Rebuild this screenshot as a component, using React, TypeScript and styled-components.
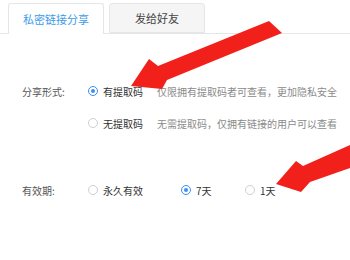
import React from 'react';
import styled, { createGlobalStyle } from 'styled-components';

const GlobalStyle = createGlobalStyle`
  body {
    margin: 0;
    background: #fff;
    font-family: "Noto Sans CJK SC", "Noto Sans", sans-serif;
  }
`;

interface OptionData {
  label: string;
  checked?: boolean;
}

const App: React.FC = () => {
  const periods: OptionData[] = [
    { label: '永久有效' },
    { label: '7天', checked: true },
    { label: '1天' },
  ];

  return (
    <Page>
      <GlobalStyle />
      <TabBar>
        <Tab active>私密链接分享</Tab>
        <Tab>发给好友</Tab>
      </TabBar>

      <Form>
        <Row>
          <Label>分享形式:</Label>
          <Option>
            <Radio checked />
            <OptionText>有提取码</OptionText>
          </Option>
          <Desc>仅限拥有提取码者可查看，更加隐私安全</Desc>
        </Row>
        <Row>
          <Label />
          <Option>
            <Radio />
            <OptionText>无提取码</OptionText>
          </Option>
          <Desc>无需提取码，仅拥有链接的用户可以查看</Desc>
        </Row>
        <Row spaced>
          <Label>有效期:</Label>
          <Options>
            {periods.map((p) => (
              <Option key={p.label}>
                <Radio checked={p.checked} />
                <OptionText>{p.label}</OptionText>
              </Option>
            ))}
          </Options>
        </Row>
      </Form>

      <Arrows width="350" height="260" viewBox="0 0 350 260">
        <polygon points="131,86 149,59 158,66 269,21 282,33 167,80 162,89" />
        <polygon points="276,184 296,161 303,166 350,145 350,168 310,182 301,192" />
      </Arrows>
    </Page>
  );
};

const Page = styled.div`
  position: relative;
  width: 350px;
  height: 260px;
  overflow: hidden;
  background: #fff;
`;

const TabBar = styled.div`
  display: flex;
  gap: 5px;
  height: 30px;
  padding: 3px 0 0 8px;
  border-bottom: 1px solid #e6e6e6;
`;

const Tab = styled.div<{ active?: boolean }>`
  display: flex;
  align-items: center;
  justify-content: center;
  width: 96px;
  height: ${({ active }) => (active ? '31px' : '30px')};
  margin-bottom: ${({ active }) => (active ? '-1px' : '0')};
  border: 1px solid #e6e6e6;
  border-bottom: ${({ active }) => (active ? 'none' : '1px solid #e6e6e6')};
  border-radius: 3px 3px 0 0;
  background: ${({ active }) => (active ? '#fff' : '#f5f5f5')};
  color: ${({ active }) => (active ? '#3d9be9' : '#444')};
  font-size: 11px;
  box-sizing: border-box;
`;

const Form = styled.div`
  display: flex;
  flex-direction: column;
  gap: 12px;
  padding: 47px 0 0 22px;
`;

const Row = styled.div<{ spaced?: boolean }>`
  display: flex;
  align-items: center;
  height: 20px;
  margin-top: ${({ spaced }) => (spaced ? '35px' : '0')};
`;

const Label = styled.div`
  width: 66px;
  flex-shrink: 0;
  color: #555;
  font-size: 10px;
`;

const Options = styled.div`
  display: grid;
  grid-template-columns: 93px 64px auto;
  align-items: center;
`;

const Option = styled.div`
  display: flex;
  align-items: center;
  gap: 5px;
`;

const Radio = styled.span<{ checked?: boolean }>`
  position: relative;
  width: 10px;
  height: 10px;
  border-radius: 50%;
  border: 1px solid ${({ checked }) => (checked ? '#3b8ff0' : '#cfcfcf')};
  box-sizing: border-box;
  background: #fff;

  &::after {
    content: '';
    display: ${({ checked }) => (checked ? 'block' : 'none')};
    position: absolute;
    left: 2px;
    top: 2px;
    width: 4px;
    height: 4px;
    border-radius: 50%;
    background: #3b8ff0;
  }
`;

const OptionText = styled.span`
  color: #333;
  font-size: 10px;
`;

const Desc = styled.span`
  margin-left: 14px;
  color: #8a8a8a;
  font-size: 10px;
`;

const Arrows = styled.svg`
  position: absolute;
  left: 0;
  top: 0;
  fill: #f2201b;
  pointer-events: none;
`;

export default App;
